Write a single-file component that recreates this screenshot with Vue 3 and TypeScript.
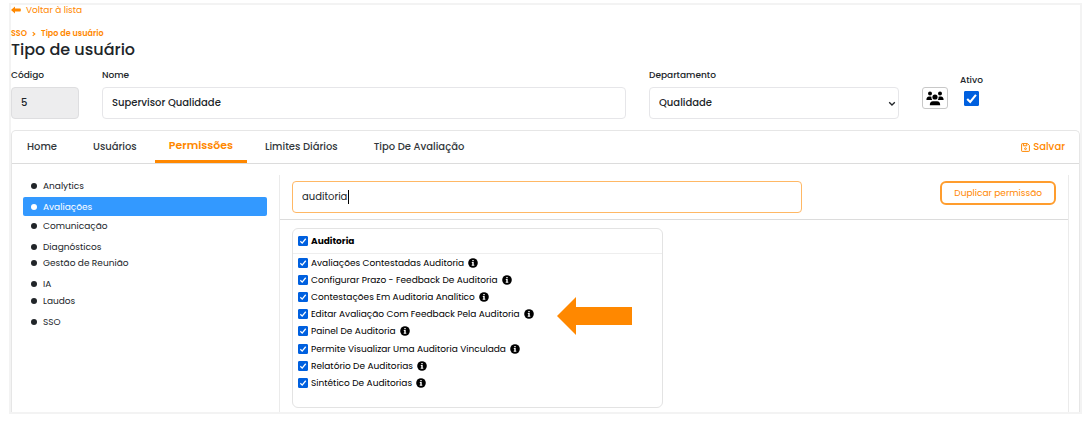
<script setup lang="ts">
import { ref } from 'vue'

interface Permission {
  label: string
  checked: boolean
}

const nome = ref('Supervisor Qualidade')
const departamento = ref('Qualidade')
const ativo = ref(true)
const busca = ref('auditoria')
const grupo = ref(true)

const tabs = ['Home', 'Usuários', 'Permissões', 'Limites Diários', 'Tipo De Avaliação']
const activeTab = ref('Permissões')

const modules = ['Analytics', 'Avaliações', 'Comunicação', 'Diagnósticos', 'Gestão de Reunião', 'IA', 'Laudos', 'SSO']
const activeModule = ref('Avaliações')

const permissions = ref<Permission[]>(
  [
    'Avaliações Contestadas Auditoria',
    'Configurar Prazo - Feedback De Auditoria',
    'Contestações Em Auditoria Analítico',
    'Editar Avaliação Com Feedback Pela Auditoria',
    'Painel De Auditoria',
    'Permite Visualizar Uma Auditoria Vinculada',
    'Relatório De Auditorias',
    'Sintético De Auditorias',
  ].map((label) => ({ label, checked: true })),
)
</script>

<template>
  <main class="page">
    <a class="back" href="#">
      <svg width="10" height="8" viewBox="0 0 10 8" aria-hidden="true">
        <path d="M0 4 4 .6v2h5.2q.6 0 .6.6v1.6q0 .6-.6.6H4v2z" fill="currentColor" />
      </svg>
      Voltar à lista
    </a>
    <nav class="crumbs" aria-label="Trilha">
      <a href="#">SSO</a>
      <svg width="4" height="6" viewBox="0 0 4 6" aria-hidden="true">
        <path d="M.7 1.2 2.8 3 .7 4.8" fill="none" stroke="currentColor" stroke-width="1.1" />
      </svg>
      <a href="#">Tipo de usuário</a>
    </nav>
    <h1>Tipo de usuário</h1>

    <form class="fields" @submit.prevent>
      <div class="field">
        <label for="codigo">Código</label>
        <input id="codigo" class="control" type="text" value="5" disabled />
      </div>
      <div class="field">
        <label for="nome">Nome</label>
        <input id="nome" v-model="nome" class="control" type="text" />
      </div>
      <div class="field">
        <label for="departamento">Departamento</label>
        <div class="select">
          <select id="departamento" v-model="departamento" class="control">
            <option>Qualidade</option>
          </select>
          <svg class="chevron" width="8" height="6" viewBox="0 0 8 6" aria-hidden="true">
            <path d="M1.2 1.2 4 4 6.8 1.2" fill="none" stroke="currentColor" stroke-width="1.3" />
          </svg>
        </div>
      </div>
      <div class="extras">
        <button class="people" type="button" aria-label="Usuários do grupo">
          <svg width="18" height="15" viewBox="0 0 18 15" aria-hidden="true" fill="currentColor">
            <circle cx="4" cy="2.4" r="2" />
            <circle cx="14" cy="2.4" r="2" />
            <circle cx="9" cy="6" r="2.6" />
            <path d="M.4 9Q.4 5.4 3 5.4h1.4q.6 0 1 .3-.2 2 .8 3.3zM17.6 9q0-3.6-2.6-3.6h-1.4q-.6 0-1 .3.2 2-.8 3.3zM3.8 14.2q0-4 3.2-4h4q3.2 0 3.2 4z" />
          </svg>
        </button>
        <div class="active-flag">
          <label for="ativo">Ativo</label>
          <input id="ativo" v-model="ativo" class="check large" type="checkbox" />
        </div>
      </div>
    </form>

    <section class="panel">
      <header class="bar">
        <nav class="tabs">
          <button
            v-for="tab in tabs"
            :key="tab"
            type="button"
            class="tab"
            :class="{ current: tab === activeTab }"
            @click="activeTab = tab"
          >
            {{ tab }}
          </button>
        </nav>
        <button class="save" type="button">
          <svg width="9" height="9" viewBox="0 0 9 9" aria-hidden="true" fill="none" stroke="currentColor">
            <path d="M.6 1.2q0-.6.6-.6h5.3l1.9 1.9v5.3q0 .6-.6.6H1.2q-.6 0-.6-.6zM2.4.8v2h3.4v-2" />
            <circle cx="4.5" cy="5.7" r=".9" />
          </svg>
          Salvar
        </button>
      </header>

      <div class="body">
        <ul class="modules">
          <li v-for="item in modules" :key="item" :class="{ selected: item === activeModule }">
            <a href="#" @click.prevent="activeModule = item">{{ item }}</a>
          </li>
        </ul>

        <div class="content">
          <div class="toolbar">
            <div class="search">
              <input v-model="busca" class="control" type="text" aria-label="Buscar permissão" />
              <span class="caret" aria-hidden="true"></span>
            </div>
            <button class="duplicate" type="button">Duplicar permissão</button>
          </div>

          <div class="results">
            <fieldset class="card">
              <label class="heading">
                <input v-model="grupo" class="check" type="checkbox" />
                Auditoria
              </label>
              <ul class="permissions">
                <li v-for="item in permissions" :key="item.label">
                  <label>
                    <input v-model="item.checked" class="check" type="checkbox" />
                    {{ item.label }}
                  </label>
                  <svg width="10" height="10" viewBox="0 0 10 10" aria-hidden="true">
                    <circle cx="5" cy="5" r="4.8" fill="#000" />
                    <path d="M4.3 1.9h1.4v1.3H4.3zM3.8 4h1.9v2.8h.6v1H3.7v-1h.6V5h-.5z" fill="#fff" />
                  </svg>
                </li>
              </ul>
              <svg class="pointer" width="75" height="38" viewBox="0 0 75 38" aria-hidden="true">
                <path d="M0 19 19 0v10h56v18H19v10z" fill="#ff8800" />
              </svg>
            </fieldset>
          </div>
        </div>
      </div>
    </section>
  </main>
</template>

<style>
body {
  margin: 0;
  background: #fff;
}
</style>

<style scoped>
* {
  box-sizing: border-box;
}

.page {
  margin: 3px 7px 0 9px;
  border: 2px solid #f3f3f3;
  color: #212529;
  font-family: Poppins, Inter, "Liberation Sans", sans-serif;
  font-size: 9px;
  line-height: 16px;
}

button,
input,
select {
  font: inherit;
  color: inherit;
}

button {
  padding: 0;
  border: 0;
  background: none;
  cursor: pointer;
}

a {
  color: inherit;
  text-decoration: none;
}

ul {
  margin: 0;
  padding: 0;
  list-style: none;
}

.back {
  display: flex;
  align-items: center;
  gap: 5px;
  width: max-content;
  margin-top: -3px;
  color: #ff8800;
}

.crumbs {
  display: flex;
  align-items: center;
  gap: 5px;
  margin-top: 10px;
  height: 12px;
  color: #ff8800;
  font-size: 8px;
  font-weight: 600;
  line-height: 12px;
}

h1 {
  margin: 0;
  font-size: 16px;
  font-weight: 500;
  line-height: 20px;
}

.fields {
  display: grid;
  grid-template-columns: 68px 524fr 250fr 158px;
  gap: 23px;
  margin-top: 7px;
}

.field {
  display: flex;
  flex-direction: column;
  gap: 4px;
  min-width: 0;
  font-weight: 500;
}

.control {
  width: 100%;
  height: 32px;
  padding: 0 9px;
  border: 1px solid #e6e6e9;
  border-radius: 4px;
  outline: 0;
  background: #fff;
  font-size: 10px;
}

.control:disabled {
  background: #ededee;
  border-color: #dedee0;
}

.select {
  position: relative;
}

select.control {
  display: block;
  appearance: none;
}

.chevron {
  position: absolute;
  top: 14px;
  right: 3px;
  pointer-events: none;
}

.extras {
  display: flex;
  align-items: flex-start;
  gap: 12px;
}

.people {
  display: grid;
  place-items: center;
  width: 26px;
  height: 22px;
  margin-top: 20px;
  border: 1px solid #c8c8c8;
  border-radius: 3px;
  color: #000;
}

.active-flag {
  display: flex;
  flex-direction: column;
  align-items: center;
  gap: 3px;
  margin-top: 5px;
  font-weight: 500;
}

.check {
  appearance: none;
  flex: none;
  width: 10px;
  height: 10px;
  margin: 0;
  border: 1px solid #0060df;
  border-radius: 1px;
}

.check:checked {
  background: #0060df
    url("data:image/svg+xml,%3Csvg xmlns='http://www.w3.org/2000/svg' viewBox='0 0 10 10'%3E%3Cpath d='M1.7 5.3 4 7.6 8.4 2.2' fill='none' stroke='white' stroke-width='1.6'/%3E%3C/svg%3E")
    center / 100% no-repeat;
}

.check.large {
  width: 15px;
  height: 15px;
}

.panel {
  margin-top: 11px;
  border: 1px solid #e6e6e6;
  border-bottom: 0;
  border-radius: 5px 5px 0 0;
}

.bar {
  display: flex;
  justify-content: space-between;
  height: 33px;
  padding-right: 14px;
  border-bottom: 1px solid #dcdcdc;
  color: #33373b;
  font-size: 10px;
  font-weight: 500;
}

.tabs {
  display: flex;
}

.tab {
  padding: 0 18px;
}

.tab:first-child {
  padding-left: 15px;
}

.tab.current {
  padding: 0 14px 1px;
  border-bottom: 3px solid #ff8800;
  color: #ff8800;
  font-size: 11px;
  font-weight: 600;
}

.save {
  display: flex;
  align-items: center;
  gap: 3px;
  color: #ff8800;
}

.body {
  display: grid;
  grid-template-columns: 244px 1fr;
  gap: 12px;
  padding: 11px 10px 0 11px;
}

.modules {
  padding-top: 3px;
}

.modules li:nth-child(even) {
  margin-top: 5px;
}

.modules li:nth-child(7) {
  margin-top: 1px;
}

.modules a {
  display: flex;
  align-items: center;
  gap: 6px;
  height: 16px;
  padding-left: 8px;
}

.modules a::before {
  width: 6px;
  height: 6px;
  border-radius: 50%;
  background: currentColor;
  content: "";
}

.modules li.selected {
  margin: 3px 0 1px;
}

.modules .selected a {
  height: 19px;
  margin-bottom: 2px;
  border-radius: 2px;
  background: #3399ff;
  color: #fff;
}

.content {
  border: solid #ebebeb;
  border-width: 0 1px;
}

.toolbar {
  display: flex;
  align-items: flex-start;
  justify-content: space-between;
  gap: 20px;
  padding: 6px 12px;
  border-bottom: 1px solid #dcdcdc;
}

.search {
  position: relative;
  flex: 0 1 510px;
}

.search .control {
  display: block;
  border-color: #ffb865;
}

.caret {
  position: absolute;
  top: 9px;
  left: 56px;
  width: 1px;
  height: 14px;
  background: #000;
}

.duplicate {
  height: 24px;
  padding: 0 12px;
  border: 2px solid #ff9d2e;
  border-radius: 6px;
  color: #ff8800;
}

.results {
  padding: 8px 12px 4px;
}

.card {
  position: relative;
  width: 50%;
  max-width: 371px;
  margin: 0;
  padding: 0 0 16px;
  border: 1px solid #e3e3e3;
  border-radius: 6px;
  color: #000;
}

.heading {
  display: flex;
  align-items: center;
  gap: 3px;
  height: 25px;
  padding-left: 5px;
  border-bottom: 1px solid #eee;
  font-weight: 700;
}

.permissions li {
  display: flex;
  align-items: center;
  gap: 4px;
  height: 17px;
  padding-left: 5px;
}

.permissions li:nth-child(6) {
  margin-top: 1px;
}

.permissions label {
  display: flex;
  align-items: center;
  gap: 3px;
}

.pointer {
  position: absolute;
  top: 68px;
  right: 30px;
}
</style>
